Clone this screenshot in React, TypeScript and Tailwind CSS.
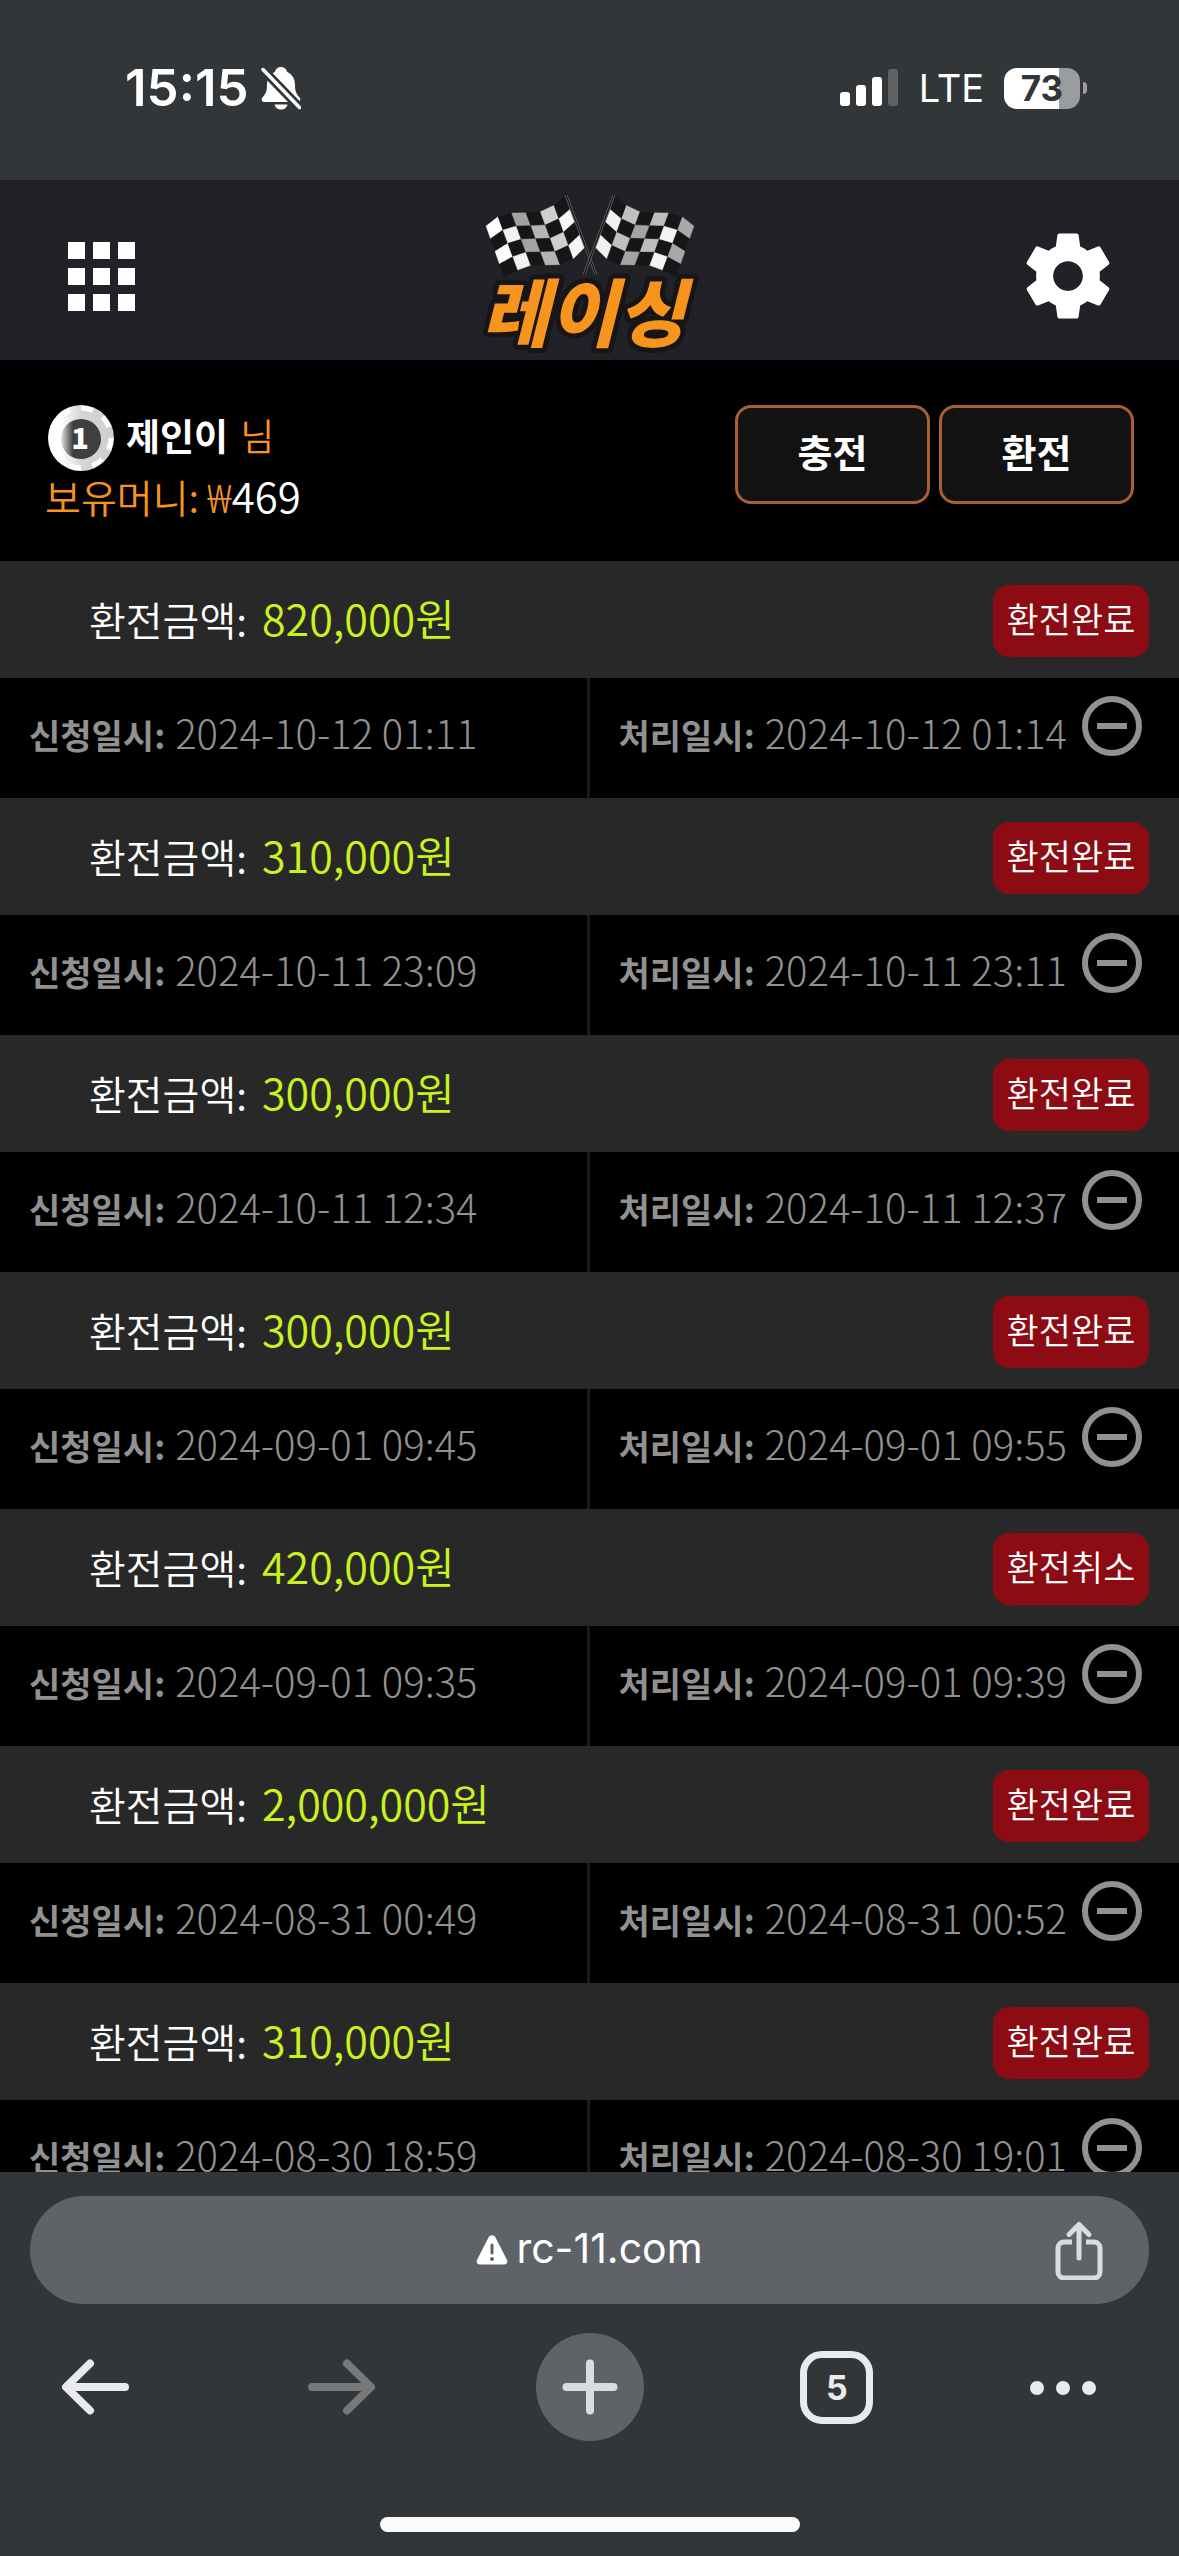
import type { ReactNode } from 'react'

type Withdrawal = {
  amount: string
  status: string
  requestedAt: string
  processedAt: string
}

const WITHDRAWALS: Withdrawal[] = [
  { amount: '820,000', status: '환전완료', requestedAt: '2024-10-12 01:11', processedAt: '2024-10-12 01:14' },
  { amount: '310,000', status: '환전완료', requestedAt: '2024-10-11 23:09', processedAt: '2024-10-11 23:11' },
  { amount: '300,000', status: '환전완료', requestedAt: '2024-10-11 12:34', processedAt: '2024-10-11 12:37' },
  { amount: '300,000', status: '환전완료', requestedAt: '2024-09-01 09:45', processedAt: '2024-09-01 09:55' },
  { amount: '420,000', status: '환전취소', requestedAt: '2024-09-01 09:35', processedAt: '2024-09-01 09:39' },
  { amount: '2,000,000', status: '환전완료', requestedAt: '2024-08-31 00:49', processedAt: '2024-08-31 00:52' },
  { amount: '310,000', status: '환전완료', requestedAt: '2024-08-30 18:59', processedAt: '2024-08-30 19:01' }
]

// Column lines of the left flag, outer edge first: [x, y] at the top and at the bottom.
const FLAG_TOP = [[138, 138], [174, 110], [215, 99], [258, 98], [301, 95], [342, 76], [375, 50]]
const FLAG_BOTTOM = [[192, 290], [233, 270], [272, 256], [316, 255], [360, 254], [400, 236], [436, 200]]
const LEFT_SHADES = ['#ffffff', '#f2f2f2', '#a3a3a3', '#b4b4b4', '#cfcfcf', '#f6f6f6']
const RIGHT_SHADES = ['#a8a8a8', '#f4f4f4', '#bdbdbd', '#a3a3a3', '#c0c0c0', '#f0f0f0']

/**
 * Point on a column line of the flag, a quarter of the cloth per row.
 */
function flagPoint(col: number, row: number) {
  const [x1, y1] = FLAG_TOP[col]
  const [x2, y2] = FLAG_BOTTOM[col]
  const t = row / 4
  return `${x1 + (x2 - x1) * t},${y1 + (y2 - y1) * t}`
}

function Flag({ shades }: { shades: string[] }) {
  return (
    <g>
      {shades.map((shade, col) =>
        [0, 1, 2, 3].map((row) => {
          const fill = (row + col) % 2 === 0 ? shade : '#181516'
          return (
            <polygon
              key={`${col}-${row}`}
              points={[
                flagPoint(col, row),
                flagPoint(col + 1, row),
                flagPoint(col + 1, row + 1),
                flagPoint(col, row + 1)
              ].join(' ')}
              fill={fill}
              stroke={fill}
              strokeWidth="1"
            />
          )
        })
      )}
      <path d="M378 45L468 283" stroke="#0c0c0c" strokeWidth="9" />
      <path d="M375 46L465 284M381 45L471 283" stroke="#8b8b8b" strokeWidth="2" />
    </g>
  )
}

function Logo() {
  return (
    <svg viewBox="126 30 648 510" className="h-[170px] w-[216px] overflow-visible" role="img" aria-label="레이싱">
      <Flag shades={LEFT_SHADES} />
      <g transform="matrix(-1 0 0 1 900 0)">
        <Flag shades={RIGHT_SHADES} />
      </g>
      <text
        x="430"
        y="482"
        textAnchor="middle"
        className="font-['Noto_Sans_CJK_KR',sans-serif] text-[222px] font-black italic"
        fill="#f7941d"
        stroke="#181516"
        strokeWidth="30"
        strokeLinejoin="round"
        paintOrder="stroke"
      >
        레이싱
      </text>
    </svg>
  )
}

function StatusBar() {
  return (
    <div className="flex h-[180px] shrink-0 items-start justify-between bg-[#333639] pt-[58px] pr-[92px] pl-[125px] font-[Inter,sans-serif] text-white">
      <div className="flex h-[60px] items-center gap-3">
        <span className="text-[51px] leading-[60px] font-semibold">15:15</span>
        <svg viewBox="0 0 40 44" className="h-11 w-10" aria-hidden="true">
          <path
            d="M20 1c3.400 0 5.600 2 6.200 5 5.400 2.400 7.800 7.400 7.800 13 0 6 1 8.500 4.500 12.500C40 33.500 39.500 36 36.500 36h-33C.5 36 0 33.500 1.500 31.500 5 27.500 6 25 6 19c0-5.600 2.400-10.600 7.800-13 .6-3 2.800-5 6.200-5z"
            fill="currentColor"
          />
          <path d="M13.500 38.500h13c-.6 3-3.300 5-6.500 5s-5.900-2-6.500-5z" fill="currentColor" />
          <path d="M2 3.500L38.500 41.500" stroke="#333639" strokeWidth="9" />
          <path d="M2 3.500L38.500 41.500" stroke="currentColor" strokeWidth="3.500" strokeLinecap="round" />
        </svg>
      </div>
      <div className="flex h-[60px] items-center">
        <svg viewBox="0 0 58 38" className="h-[38px] w-[58px]" aria-hidden="true">
          <rect x="0" y="23" width="10" height="14" rx="3" fill="currentColor" />
          <rect x="16" y="16" width="10" height="21" rx="3" fill="currentColor" />
          <rect x="32" y="8" width="10" height="29" rx="3" fill="currentColor" />
          <rect x="48" y="0" width="10" height="37" rx="3" fill="#606163" />
        </svg>
        <span className="ml-[21px] text-[38px] leading-[60px]">LTE</span>
        <div className="ml-5 flex h-[41px] w-[76px] items-center justify-center rounded-[13px] bg-linear-to-r from-white from-73% to-[#9b9c9e] to-73% text-[35px] leading-[41px] font-bold text-[#333639]">
          73
        </div>
        <div className="ml-[3px] h-3 w-1 rounded-r-full bg-[#9b9c9e]" />
      </div>
    </div>
  )
}

function SiteHeader() {
  return (
    <header className="flex h-[180px] shrink-0 items-center justify-between bg-[#212227] px-[60px] pt-[10px] text-white">
      <button type="button" aria-label="메뉴" className="flex w-[102px] px-2 pt-[2px]">
        <span className="grid grid-cols-3 gap-x-2 gap-y-[9px]">
          {Array.from({ length: 9 }, (_, i) => (
            <span key={i} className="size-[17px] bg-white" />
          ))}
        </span>
      </button>
      <a href="#home">
        <Logo />
      </a>
      <button type="button" aria-label="설정" className="pt-[2px]">
        <svg viewBox="0 0 24 24" className="size-[102px]" fill="currentColor" aria-hidden="true">
          <path d="M19.430 12.980c.04-.32.07-.64.07-.98s-.03-.66-.07-.98l2.110-1.650c.19-.15.24-.42.12-.64l-2-3.460c-.12-.22-.39-.3-.61-.22l-2.490 1c-.52-.4-1.080-.73-1.690-.98l-.38-2.650C14.460 2.180 14.250 2 14 2h-4c-.25 0-.46.18-.49.42l-.38 2.650c-.61.25-1.170.59-1.690.98l-2.490-1c-.23-.09-.49 0-.61.22l-2 3.460c-.13.22-.07.49.12.64l2.110 1.650c-.04.32-.07.65-.07.98s.03.66.07.98l-2.110 1.650c-.19.15-.24.42-.12.64l2 3.460c.12.22.39.3.61.22l2.490-1c.52.4 1.080.73 1.690.98l.38 2.650c.03.24.24.42.49.42h4c.25 0 .46-.18.49-.42l.38-2.650c.61-.25 1.170-.59 1.690-.98l2.490 1c.23.09.49 0 .61-.22l2-3.460c.12-.22.07-.49-.12-.64l-2.110-1.650zM12 15.500c-1.930 0-3.500-1.570-3.500-3.500s1.570-3.500 3.500-3.500 3.500 1.570 3.500 3.500-1.570 3.500-3.500 3.500z" />
        </svg>
      </button>
    </header>
  )
}

/** Casino-chip style badge with the member level. */
function LevelChip() {
  return (
    <svg viewBox="0 0 66 66" className="size-[66px]" role="img" aria-label="레벨 1">
      <defs>
        <linearGradient id="chip-rim">
          <stop offset="0.2" stopColor="#ffffff" />
          <stop offset="0.5" stopColor="#d6d6d6" />
          <stop offset="1" stopColor="#cfcfcf" />
        </linearGradient>
        <linearGradient id="chip-face">
          <stop offset="0" stopColor="#e4e4e4" />
          <stop offset="0.3" stopColor="#3f3f3f" />
        </linearGradient>
      </defs>
      <circle cx="33" cy="33" r="33" fill="url(#chip-rim)" />
      <circle cx="33" cy="33" r="30" fill="none" stroke="#ffffff" strokeWidth="5" strokeDasharray="12 11.560" />
      <circle cx="33" cy="34" r="20" fill="url(#chip-face)" />
      <text x="32" y="44" textAnchor="middle" fill="#ffffff" className="font-['Noto_Sans_CJK_KR',sans-serif] text-[29px] font-black">
        1
      </text>
    </svg>
  )
}

function ActionButton({ children }: { children: ReactNode }) {
  return (
    <button
      type="button"
      className="h-[99px] w-[195px] rounded-2xl border-3 border-[#a85f35] bg-[#121212] pb-2 text-[38px] leading-[54px] font-bold text-white"
    >
      {children}
    </button>
  )
}

function UserPanel() {
  return (
    <section className="flex h-[201px] shrink-0 items-start justify-between bg-black pt-[45px] pr-[45px] pl-[45px]">
      <div>
        <div className="flex items-start pl-[3px] text-[37px] leading-[60px]">
          <LevelChip />
          <strong className="ml-3 font-bold text-white">제인이</strong>
          <span className="ml-3 font-[350] text-[#f7941d]">님</span>
        </div>
        <p className="flex items-baseline text-[39px] leading-[48px] font-[350] text-[#f7941d]">
          보유머니:
          <span className="ml-2 font-['Noto_Sans',sans-serif] font-light">₩</span>
          <span className="text-[42px] text-white">469</span>
        </p>
      </div>
      <div className="flex gap-[9px]">
        <ActionButton>충전</ActionButton>
        <ActionButton>환전</ActionButton>
      </div>
    </section>
  )
}

function DateField({ label, value }: { label: string; value: string }) {
  return (
    <p className="leading-[54px] whitespace-nowrap">
      <span className="text-[34px] font-bold">{label}:</span>
      <time className="ml-[10px] text-[40px] font-light">{value}</time>
    </p>
  )
}

function WithdrawalItem({ item }: { item: Withdrawal }) {
  return (
    <li>
      <div className="flex h-[117px] items-center justify-between bg-[#282828] pr-[30px] pl-[89px]">
        <p className="flex items-baseline gap-[15px] pb-[3px] text-[40px] leading-[60px] font-[350] text-white">
          환전금액:
          <span className="text-[43px] text-[#c8f31d]">{item.amount}원</span>
        </p>
        <span className="mt-[3px] h-[72px] w-[156px] rounded-2xl bg-[#8d0c14] text-center text-[35px] leading-[66px] font-[350] text-white">
          {item.status}
        </span>
      </div>
      <div className="grid h-[120px] grid-cols-2 bg-black text-[#919191]">
        <div className="flex items-center border-r-3 border-[#1b1b1b] pb-[2px] pl-[29px]">
          <DateField label="신청일시" value={item.requestedAt} />
        </div>
        <div className="flex justify-between pr-[37px] pl-[29px]">
          <div className="flex items-center pb-[2px]">
            <DateField label="처리일시" value={item.processedAt} />
          </div>
          <button type="button" aria-label="내역 삭제" className="mt-[18px] size-[60px]">
            <svg viewBox="0 0 60 60" className="size-[60px]" fill="none" stroke="currentColor" strokeWidth="6" aria-hidden="true">
              <circle cx="30" cy="30" r="27" />
              <path d="M15 30h30" />
            </svg>
          </button>
        </div>
      </div>
    </li>
  )
}

function ToolbarButton({ label, className = '', children }: { label: string; className?: string; children: ReactNode }) {
  return (
    <button type="button" aria-label={label} className={`flex size-[108px] items-center ${className}`}>
      {children}
    </button>
  )
}

function BrowserToolbar() {
  return (
    <footer className="shrink-0 bg-[#333639] pt-6 pb-6 font-[Inter,sans-serif] text-[#e8eaed]">
      <div className="mx-[30px] grid h-[108px] grid-cols-[1fr_auto_1fr] items-center rounded-full bg-[#5f6368]">
        <span />
        <button type="button" className="flex items-center gap-2 pb-1 text-[41px] leading-[48px] text-white">
          <svg viewBox="0 0 32 30" className="mt-1 h-[30px] w-8" aria-hidden="true">
            <path
              d="M12.500 2.500c1.500-3 5.500-3 7 0l11.500 22.500c1 2.500-.5 4.500-3 4.500H4c-2.500 0-4-2-3-4.500z"
              fill="currentColor"
            />
            <path d="M16 10v8" stroke="#5f6368" strokeWidth="3" strokeLinecap="round" />
            <circle cx="16" cy="24" r="2" fill="#5f6368" />
          </svg>
          rc-11.com
        </button>
        <button type="button" aria-label="공유" className="mr-[45px] justify-self-end text-[#dadce0]">
          <svg
            viewBox="0 0 50 60"
            className="h-[60px] w-[50px]"
            fill="none"
            stroke="currentColor"
            strokeWidth="5"
            strokeLinecap="round"
            strokeLinejoin="round"
            aria-hidden="true"
          >
            <path d="M18 22H10a6 6 0 0 0-6 6v24a6 6 0 0 0 6 6h30a6 6 0 0 0 6-6V28a6 6 0 0 0-6-6h-8" strokeLinecap="butt" />
            <path d="M25 38V5M15 14.500L25 4.500l10 10" />
          </svg>
        </button>
      </div>

      <nav className="mt-[29px] flex justify-between px-[41px]">
        <ToolbarButton label="뒤로" className="justify-center">
          <svg viewBox="0 0 68 56" className="h-14 w-[68px]" fill="none" stroke="currentColor" strokeWidth="8" strokeLinecap="round" strokeLinejoin="round" aria-hidden="true">
            <path d="M64 28H6M29 4.500L5 28l24 23.500" />
          </svg>
        </ToolbarButton>
        <ToolbarButton label="앞으로" className="justify-center text-[#77787a]">
          <svg viewBox="0 0 68 56" className="h-14 w-[68px]" fill="none" stroke="currentColor" strokeWidth="8" strokeLinecap="round" strokeLinejoin="round" aria-hidden="true">
            <path d="M4 28h58M39 4.500L63 28 39 51.500" />
          </svg>
        </ToolbarButton>
        <ToolbarButton label="새 탭" className="justify-center rounded-full bg-[#5f6368] text-[#dadce0]">
          <svg viewBox="0 0 56 56" className="size-14" stroke="currentColor" strokeWidth="8" strokeLinecap="round" aria-hidden="true">
            <path d="M28 4.500v47M4.500 28h47" />
          </svg>
        </ToolbarButton>
        <ToolbarButton label="탭 5개" className="justify-center">
          <span className="flex size-[73px] items-center justify-center rounded-[22px] border-[7px] border-[#e8eaed] text-[34px] leading-[41px] font-bold">
            5
          </span>
        </ToolbarButton>
        <ToolbarButton label="더보기">
          <svg viewBox="0 0 68 16" className="h-4 w-[68px]" fill="currentColor" aria-hidden="true">
            <circle cx="7" cy="9" r="7" />
            <circle cx="33" cy="9" r="7" />
            <circle cx="59" cy="9" r="7" />
          </svg>
        </ToolbarButton>
      </nav>

      <div className="mx-auto mt-[76px] h-[15px] w-[420px] rounded-full bg-[#fcfcfc]" />
    </footer>
  )
}

/**
 * Withdrawal history page inside the mobile browser.
 */
export default function App() {
  return (
    <div className="flex h-screen flex-col overflow-hidden bg-black font-['Noto_Sans_CJK_KR',sans-serif]">
      <StatusBar />
      <SiteHeader />
      <UserPanel />
      <main className="min-h-0 flex-1 overflow-y-auto [scrollbar-width:none]">
        <ul>
          {WITHDRAWALS.map((item) => (
            <WithdrawalItem key={item.requestedAt} item={item} />
          ))}
        </ul>
      </main>
      <BrowserToolbar />
    </div>
  )
}
